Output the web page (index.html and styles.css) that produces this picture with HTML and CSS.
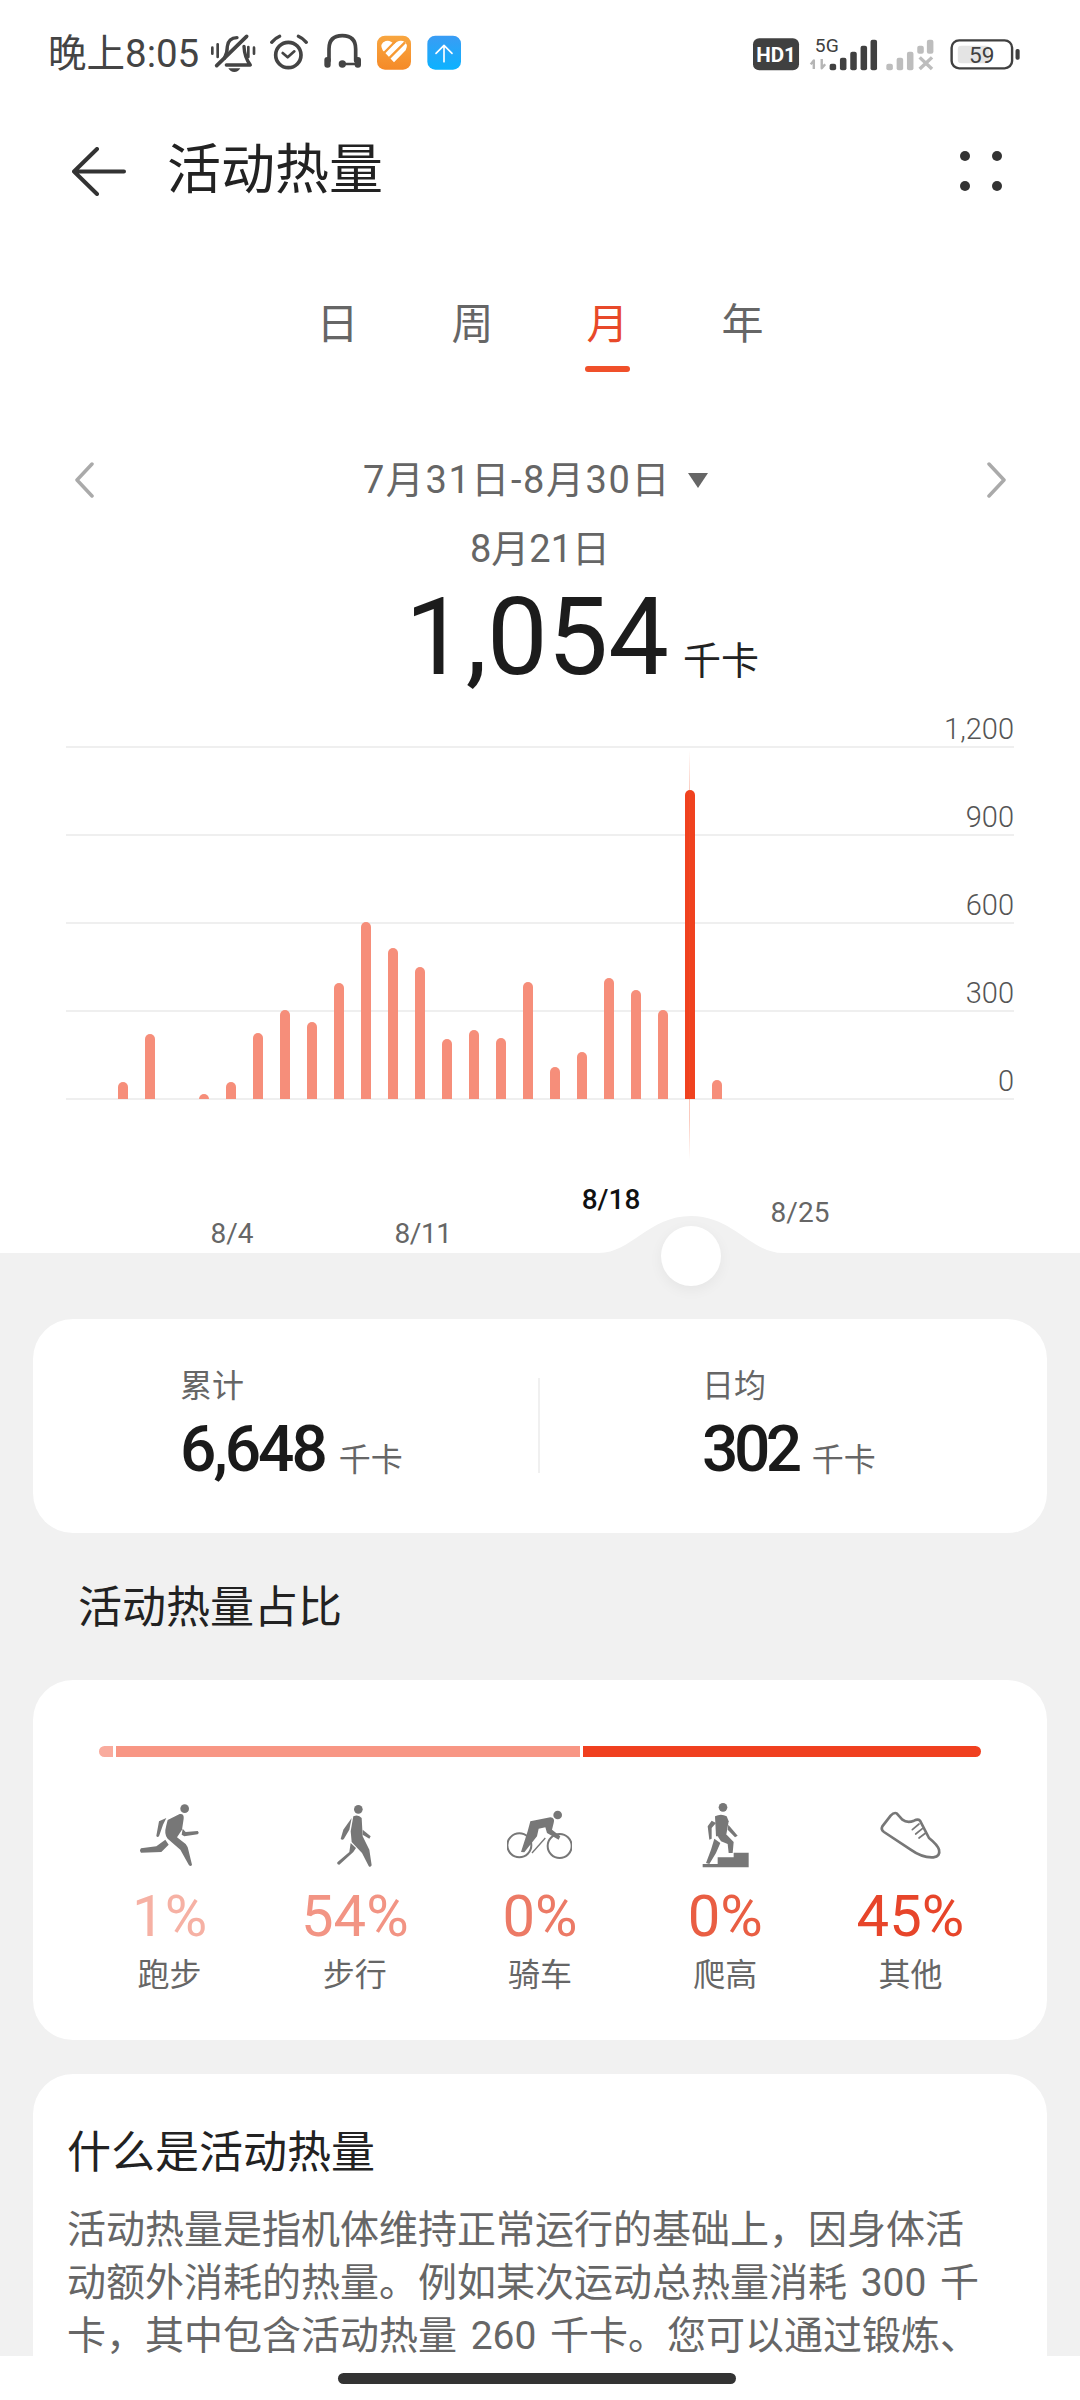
FILE: index.html
```html
<!DOCTYPE html>
<html lang="zh-CN">
<head>
<meta charset="utf-8">
<title>活动热量</title>
<link rel="stylesheet" href="styles.css">
</head>
<body>
<div class="page">
  <div class="status">
    <span class="clock">晚上8:05</span>
    <svg class="status-left" viewBox="0 0 780 150" aria-hidden="true">
      <g fill="none" stroke="#444" stroke-width="11" stroke-linecap="round" stroke-linejoin="round">
        <path d="M58 88Q67 72 67 52Q70 27 96 26M117 52Q118 84 136 108H64" stroke-width="10"/>
        <path d="M35 110L125 22"/>
        <path d="M22 56V74M38 46V84M130 54V84M147 56V74" stroke-width="8"/>
        <circle cx="250" cy="78" r="38"/>
        <path d="M200 40Q210 28 224 22M280 22Q294 28 304 40" stroke-width="10"/>
        <path d="M233 72L248 85L268 67" stroke-width="8"/>
        <path d="M372 95V60Q372 20 412 20Q452 20 452 60V95"/>
        <path d="M412 105H452" stroke-width="7"/>
      </g>
      <g fill="#444">
        <path d="M70 118H106Q100 129 88 129Q76 129 70 118Z"/>
        <rect x="358" y="84" width="19" height="32" rx="9"/>
        <rect x="449" y="84" width="19" height="32" rx="9"/>
        <circle cx="412" cy="105" r="11"/>
      </g>
      <defs>
        <linearGradient id="tileOrange" x1="0" y1="0" x2="0" y2="1"><stop offset="0" stop-color="#f8a640"/><stop offset="1" stop-color="#f58a28"/></linearGradient>
        <linearGradient id="tileBlue" x1="0" y1="0" x2="0" y2="1"><stop offset="0" stop-color="#3a9cf4"/><stop offset="1" stop-color="#0cb2ff"/></linearGradient>
      </defs>
      <rect x="516" y="20" width="102" height="102" rx="24" fill="url(#tileOrange)"/>
      <path d="M567 100L533 64Q522 44 542 36Q556 32 567 46Q578 32 594 36Q612 44 602 64Z" fill="#fff"/>
      <path d="M537 72L572 36M552 88L600 40" stroke="#f79a34" stroke-width="7" fill="none"/>
      <rect x="667" y="20" width="101" height="102" rx="24" fill="url(#tileBlue)"/>
      <path d="M717 98V50M693 73L717 49L741 73" stroke="#fff" stroke-width="5" stroke-linecap="round" stroke-linejoin="round" fill="none"/>
    </svg>
    <svg class="status-right" viewBox="618 110 777 102" preserveAspectRatio="none" aria-hidden="true">
      <rect x="618" y="114" width="134" height="96" rx="18" fill="#404040"/>
      <text x="685" y="185" class="hd-text">HD1</text>
      <text x="798" y="155" class="g-text">5G</text>
      <path d="M795 206V180L786 192M818 176V204L828 192" stroke="#b5b5b5" stroke-width="7" fill="none" stroke-linejoin="round"/>
      <g fill="#404040">
        <rect x="841" y="190" width="19" height="20" rx="6"/>
        <rect x="871" y="172" width="19" height="38" rx="6"/>
        <rect x="901" y="154" width="19" height="56" rx="6"/>
        <rect x="931" y="136" width="19" height="74" rx="6"/>
        <rect x="960" y="118" width="19" height="92" rx="6"/>
      </g>
      <g fill="#bdbdbd">
        <rect x="1006" y="190" width="19" height="20" rx="6"/>
        <rect x="1036" y="172" width="19" height="38" rx="6"/>
        <rect x="1066" y="154" width="19" height="56" rx="6"/>
        <rect x="1096" y="136" width="19" height="24" rx="6"/>
        <rect x="1124" y="118" width="19" height="42" rx="6"/>
      </g>
      <path d="M1103 171L1139 206M1139 171L1103 206" stroke="#bdbdbd" stroke-width="10" fill="none"/>
      <rect x="1196" y="120" width="176" height="84" rx="22" fill="none" stroke="#404040" stroke-width="7"/>
      <rect x="1214" y="136" width="92" height="53" rx="10" fill="#e4e4e4"/>
      <rect x="1382" y="146" width="12" height="32" rx="5" fill="#404040"/>
      <text x="1284" y="187" class="batt-text">59</text>
    </svg>
  </div>

  <header class="appbar">
    <svg class="back" viewBox="0 0 54 49" aria-hidden="true"><path d="M25 2L2 24.500L25 47M2 24.500H52" fill="none" stroke="#333" stroke-width="4" stroke-linecap="round" stroke-linejoin="round"/></svg>
    <h1 class="title">活动热量</h1>
    <div class="more" aria-hidden="true"><i></i><i></i><i></i><i></i></div>
  </header>

  <nav class="tabs">
    <div class="tab">日</div>
    <div class="tab">周</div>
    <div class="tab tab-on">月</div>
    <div class="tab">年</div>
  </nav>

  <div class="datenav">
    <svg class="chev" viewBox="0 0 20 36" aria-hidden="true"><path d="M18 2L3 18L18 34" fill="none" stroke="#aaa" stroke-width="3.500" stroke-linecap="round" stroke-linejoin="round"/></svg>
    <div class="range">7月31日-8月30日<span class="caret"></span></div>
    <svg class="chev" viewBox="0 0 20 36" aria-hidden="true"><path d="M2 2L17 18L2 34" fill="none" stroke="#aaa" stroke-width="3.500" stroke-linecap="round" stroke-linejoin="round"/></svg>
  </div>

  <div class="day">8月21日</div>
  <div class="hero"><span class="hero-num">1,054</span><span class="hero-unit">千卡</span></div>

  <section class="chart">
    <div class="row row-first"><span>1,200</span></div>
    <div class="row"><span>900</span></div>
    <div class="row"><span>600</span></div>
    <div class="row"><span>300</span></div>
    <div class="row"><span>0</span></div>
    <div class="bars">
      <i style="height:17px"></i><i style="height:65px"></i><i style="height:0"></i><i style="height:5px"></i><i style="height:17px"></i><i style="height:66px"></i><i style="height:89px"></i><i style="height:77px"></i><i style="height:116px"></i><i style="height:177px"></i><i style="height:151px"></i><i style="height:132px"></i><i style="height:60px"></i><i style="height:69px"></i><i style="height:61px"></i><i style="height:117px"></i><i style="height:32px"></i><i style="height:47px"></i><i style="height:121px"></i><i style="height:109px"></i><i style="height:89px"></i><i class="bar-on" style="height:309px"></i><i style="height:19px"></i>
    </div>
    <span class="tick tick-a">8/4</span>
    <span class="tick tick-b">8/11</span>
    <span class="tick tick-c">8/18</span>
    <span class="tick tick-d">8/25</span>
  </section>

  <main class="lower">
    <svg class="hump" viewBox="0 0 184 38" aria-hidden="true"><path d="M0 38C32 38 50 1 92 1C134 1 152 38 184 38Z" fill="#f1f1f1"/></svg>
    <div class="knob"></div>

    <section class="card stats">
      <div class="stat stat-l">
        <div class="stat-label">累计</div>
        <div class="stat-value"><b>6,648</b><span>千卡</span></div>
      </div>
      <div class="divider"></div>
      <div class="stat stat-r">
        <div class="stat-label">日均</div>
        <div class="stat-value"><b>302</b><span>千卡</span></div>
      </div>
    </section>

    <h2 class="section-title">活动热量占比</h2>

    <section class="card share">
      <div class="share-bar"><i class="seg seg-a"></i><i class="seg seg-b"></i><i class="seg seg-c"></i></div>
      <div class="share-grid">
        <div class="item">
          <svg class="ico" viewBox="170 245 195 195" aria-hidden="true"><circle cx="313" cy="262" r="13"/><path d="M258 312L262 296L298 278Q312 276 310 292L305 325L290 348L316 368Q322 375 324 385L335 430Q332 437 326 432L300 385L262 352Q250 340 258 312Z"/><path d="M255 355L265 370L243 392L182 394Q176 388 182 381L228 375Z"/><path d="M236 300L258 290L248 310L236 345Q230 350 228 343Z"/><path d="M307 322L316 332L352 329Q358 335 352 339L312 345L304 340Z"/></svg>
          <div class="pct pct-a">1%</div><div class="name">跑步</div>
        </div>
        <div class="item">
          <svg class="ico" viewBox="726 245 195 195" aria-hidden="true"><circle cx="835" cy="264" r="13"/><path d="M820 285Q835 278 845 290L848 345L868 385L875 432Q870 440 866 434L846 395L815 362L812 330Z"/><path d="M815 290L790 325L782 353Q788 358 792 352L808 325Z"/><path d="M848 325L872 345L868 352L848 340Z"/><path d="M812 365L828 380L820 392L778 430Q770 430 772 423L808 392Z"/></svg>
          <div class="pct pct-b">54%</div><div class="name">步行</div>
        </div>
        <div class="item">
          <svg class="ico" viewBox="1280 245 195 195" aria-hidden="true"><circle cx="1317" cy="372" r="36" class="wheel"/><circle cx="1438" cy="374" r="36" class="wheel"/><circle cx="1432" cy="281" r="13"/><path d="M1350 300L1410 288Q1425 290 1420 305L1415 325L1440 345L1435 355L1400 335L1395 318L1375 322L1370 345L1332 393L1322 392L1342 330Z"/><path d="M1355 395L1395 350" class="wheel thin"/></svg>
          <div class="pct pct-c">0%</div><div class="name">骑车</div>
        </div>
        <div class="item">
          <svg class="ico" viewBox="396 245 195 195" aria-hidden="true"><circle cx="486" cy="258" r="13"/><path d="M425 428L470 428L470 408L518 408L518 394L563 394L563 438L425 438Z"/><path d="M462 285Q480 275 497 285L503 300L495 345L465 345Z"/><path d="M452 298L440 315L445 355L452 352L452 320L465 305Z"/><path d="M502 310L530 343L522 348L500 325Z"/><path d="M470 345L497 340L518 362L515 395L503 395L500 368L480 360Z"/><path d="M460 352L478 365L465 395L445 428L435 425L450 385Z"/></svg>
          <div class="pct pct-d">0%</div><div class="name">爬高</div>
        </div>
        <div class="item">
          <svg class="ico" viewBox="952 245 195 195" aria-hidden="true"><path class="shoe" d="M1008 276Q1000 272 990 283L965 315Q960 325 970 332L1050 385Q1085 410 1118 408Q1140 405 1135 385Q1130 370 1105 350L1078 298Q1072 292 1060 298Q1040 306 1025 295Z"/><path class="shoe thin" d="M1055 325L1075 308M1065 338L1085 322M1075 350L1095 335"/></svg>
          <div class="pct pct-e">45%</div><div class="name">其他</div>
        </div>
      </div>
    </section>

    <section class="card about">
      <h3 class="about-title">什么是活动热量</h3>
      <p class="about-text">活动热量是指机体维持正常运行的基础上，因身体活<br>动额外消耗的热量。例如某次运动总热量消耗 300 千<br>卡，其中包含活动热量 260 千卡。您可以通过锻炼、</p>
    </section>
  </main>

  <div class="navbar"><span class="handle"></span></div>
</div>
</body>
</html>
```
FILE: styles.css
```css
* { box-sizing: border-box; margin: 0; padding: 0; }
html, body { background: #fff; }
body { font-family: Roboto, "Noto Sans CJK SC", sans-serif; color: #222; }
.page { position: relative; width: 1080px; height: 2400px; overflow: hidden; background: #fff; }

/* status bar */
.status { height: 108px; display: flex; align-items: center; padding-left: 48px; }
.clock { font-size: 38.500px; line-height: 44px; color: #444; width: 157px; flex: none; white-space: nowrap; }
.status-left { width: 260px; height: 50px; flex: none; }
.status-right { width: 267px; height: 34px; margin-left: 288px; flex: none; overflow: visible; }
.hd-text { font: 700 60px Roboto, sans-serif; fill: #fff; text-anchor: middle; }
.g-text { font: 400 56px Roboto, sans-serif; fill: #404040; }
.batt-text { font: 400 66px Roboto, sans-serif; fill: #404040; text-anchor: middle; }

/* app bar */
.appbar { height: 126px; display: flex; align-items: center; padding: 0 78px 0 72px; }
.back { width: 54px; height: 49px; flex: none; }
.title { font-size: 54px; font-weight: 400; line-height: 70px; color: #222; margin-left: 41px; flex: 1; }
.more { display: grid; grid-template-columns: 10px 10px; gap: 20px 22px; }
.more i { width: 10px; height: 10px; border-radius: 50%; background: #333; }

/* tabs */
.tabs { display: flex; justify-content: center; margin-top: 61px; }
.tab { width: 135px; height: 77px; text-align: center; font-size: 42px; line-height: 60px; color: #666; position: relative; }
.tab-on { color: #e8492a; }
.tab-on::after { content: ""; position: absolute; left: 45px; bottom: 0; width: 45px; height: 6px; border-radius: 3px; background: #f0502a; }

/* date row */
.datenav { height: 50px; margin-top: 83px; display: flex; align-items: center; justify-content: space-between; padding: 0 73px 0 74px; }
.chev { width: 20px; height: 36px; }
.range { font-size: 38px; letter-spacing: 1.600px; line-height: 50px; color: #666; display: flex; align-items: center; margin-right: 10px; }
.caret { width: 0; height: 0; margin-left: 17px; border-left: 10px solid transparent; border-right: 10px solid transparent; border-top: 15px solid #666; }
.day { margin-top: 19px; height: 50px; text-align: center; font-size: 38px; line-height: 50px; color: #666; }
.hero { height: 126px; padding: 8px 0 0 84px; display: flex; justify-content: center; align-items: baseline; gap: 14px; }
.hero-num { font-size: 108px; line-height: 110px; color: #1c1c1c; }
.hero-unit { font-size: 38px; line-height: 44px; color: #222; }

/* chart */
.chart { position: relative; height: 553px; margin-left: 66px; width: 948px; }
.row { height: 88px; border-bottom: 2px solid #efefef; display: flex; justify-content: flex-end; align-items: flex-end; font-size: 29px; font-weight: 300; line-height: 34px; color: #555; }
.row-first { height: 48px; }
.bars { position: absolute; left: 52px; top: 399px; height: 0; display: flex; align-items: flex-end; gap: 17px; }
.bars i { display: block; width: 10px; flex: none; background: #f68e7a; border-radius: 5px 5px 0 0; position: relative; }
.bars .bar-on { background: #f0421f; }
.bars .bar-on::after { content: ""; position: absolute; left: 4px; top: -40px; bottom: -61px; width: 1px; background: linear-gradient(to bottom, rgba(240,80,40,0), rgba(240,80,40,.3) 10%, rgba(240,80,40,.3) 90%, rgba(240,80,40,0)); }
.tick { position: absolute; transform: translateX(-50%); font-size: 28px; line-height: 34px; color: #666; }
.tick-a { left: 166px; top: 517px; }
.tick-b { left: 357px; top: 517px; letter-spacing: -.5px; }
.tick-c { left: 545px; top: 483px; color: #111; font-weight: 500; }
.tick-d { left: 734px; top: 496px; }

/* lower part */
.lower { position: relative; height: 1147px; background: #f1f1f1; padding: 66px 33px 0; }
.hump { position: absolute; left: 599px; top: -38px; width: 184px; height: 38px; }
.knob { position: absolute; left: 661px; top: -27px; width: 60px; height: 60px; border-radius: 50%; background: #fff; box-shadow: 0 4px 14px rgba(0,0,0,.05); }
.card { background: #fff; border-radius: 40px; }

.stats { height: 214px; display: flex; align-items: flex-start; }
.stat { flex: none; padding-top: 45px; }
.stat-l { width: 505px; padding-left: 147px; }
.stat-r { padding-left: 162px; }
.stat-label { font-size: 32px; line-height: 44px; color: #666; }
.stat-value { margin-top: 7px; display: flex; align-items: baseline; gap: 14px; }
.stat-value b { font-size: 64px; line-height: 70px; font-weight: 500; letter-spacing: -3px; color: #1a1a1a; }
.stat-r .stat-value b { letter-spacing: -4.500px; }
.stat-value span { font-size: 32px; line-height: 44px; color: #666; }
.divider { width: 2px; height: 95px; margin-top: 59px; background: #f0f0f0; flex: none; }

.section-title { height: 147px; padding: 45px 0 0 45px; font-size: 44px; font-weight: 400; line-height: 60px; color: #222; }

.share { height: 360px; padding: 66px 44px 0; }
.share-bar { display: flex; gap: 3px; height: 11px; margin: 0 22px; }
.seg { display: block; height: 11px; }
.seg-a { width: 14px; background: #f9ab9d; border-radius: 6px 0 0 6px; }
.seg-b { width: 464px; background: #f89684; }
.seg-c { flex: 1; background: #f0401f; border-radius: 0 6px 6px 0; }
.share-grid { display: grid; grid-template-columns: repeat(5, 1fr); margin-top: 46px; }
.item { display: flex; flex-direction: column; align-items: center; }
.ico { width: 65px; height: 65px; fill: #777; }
.wheel { fill: none; stroke: #777; stroke-width: 6; }
.thin { stroke-width: 4; }
.shoe { fill: none; stroke: #777; stroke-width: 8; stroke-linejoin: round; stroke-linecap: round; }
.shoe.thin { stroke-width: 5; }
.pct { margin-top: 13px; font-size: 58px; font-weight: 400; line-height: 70px; }
.pct-a { color: #f6b1a4; }
.pct-b { color: #f29484; }
.pct-c { color: #ec7a66; }
.pct-d { color: #e95e43; }
.pct-e { color: #e7452a; }
.name { margin-top: 2px; font-size: 32px; line-height: 44px; color: #666; }

.about { margin-top: 34px; height: 400px; padding: 49px 34px 0; }
.about-title { font-size: 44px; font-weight: 400; line-height: 60px; color: #222; }
.about-text { margin-top: 21px; font-size: 39px; word-spacing: 4px; line-height: 53px; color: #666; white-space: nowrap; }

/* gesture bar */
.navbar { position: absolute; left: 0; right: 0; bottom: 0; height: 44px; background: #fff; display: flex; justify-content: center; padding: 17px 6px 0 0; }
.handle { width: 398px; height: 11px; border-radius: 6px; background: #333; }
```
